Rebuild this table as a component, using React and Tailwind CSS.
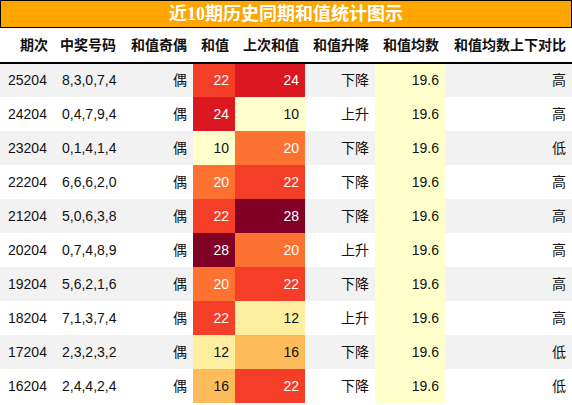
const rows = [
  ['25204', '8,3,0,7,4', '偶', 22, 24, '下降', '19.6', '高'],
  ['24204', '0,4,7,9,4', '偶', 24, 10, '上升', '19.6', '高'],
  ['23204', '0,1,4,1,4', '偶', 10, 20, '下降', '19.6', '低'],
  ['22204', '6,6,6,2,0', '偶', 20, 22, '下降', '19.6', '高'],
  ['21204', '5,0,6,3,8', '偶', 22, 28, '下降', '19.6', '高'],
  ['20204', '0,7,4,8,9', '偶', 28, 20, '上升', '19.6', '高'],
  ['19204', '5,6,2,1,6', '偶', 20, 22, '下降', '19.6', '高'],
  ['18204', '7,1,3,7,4', '偶', 22, 12, '上升', '19.6', '高'],
  ['17204', '2,3,2,3,2', '偶', 12, 16, '下降', '19.6', '低'],
  ['16204', '2,4,4,2,4', '偶', 16, 22, '下降', '19.6', '低'],
]

// heat colours for 和值 cells
const heat = {
  10: 'bg-[#ffffcc] text-[#111]',
  12: 'bg-[#ffeda0] text-[#111]',
  16: 'bg-[#febb5a] text-[#111]',
  20: 'bg-[#fe7231] text-white',
  22: 'bg-[#f43e27] text-white',
  24: 'bg-[#db1721] text-white',
  28: 'bg-[#800026] text-white',
}

const headers = ['期次', '中奖号码', '和值奇偶', '和值', '上次和值', '和值升降', '和值均数', '和值均数上下对比']

export default function App() {
  return (
    <div className="w-[572px] h-[405px] bg-white overflow-hidden text-[#111]" style={{ fontFamily: '"Liberation Sans", "Noto Sans CJK SC", sans-serif' }}>
      <div
        className="h-[28px] bg-[#ffa500] border border-black flex items-center justify-center text-white font-bold text-[18px] leading-none"
        style={{ fontFamily: '"Liberation Serif", "Noto Sans CJK SC", serif' }}
      >
        近10期历史同期和值统计图示
      </div>
      <table className="w-full table-fixed border-collapse text-[14px]">
        <colgroup>
          <col className="w-[54px]" />
          <col className="w-[68px]" />
          <col className="w-[71px]" />
          <col className="w-[42px]" />
          <col className="w-[70px]" />
          <col className="w-[70px]" />
          <col className="w-[70px]" />
          <col className="w-[127px]" />
        </colgroup>
        <thead>
          <tr className="h-[35px] border-b-2 border-black">
            {headers.map((h) => (
              <th key={h} className="text-right pr-[6px] font-bold whitespace-nowrap">{h}</th>
            ))}
          </tr>
        </thead>
        <tbody>
          {rows.map((r, i) => (
            <tr key={r[0]} className={`h-[34px] ${i % 2 === 0 ? 'bg-[#f2f2f2]' : 'bg-white'}`}>
              <td className="pl-[8px] text-left">{r[0]}</td>
              <td className="pl-[8px] text-left">{r[1]}</td>
              <td className="pr-[6px] text-right">{r[2]}</td>
              <td className={`pr-[6px] text-right ${heat[r[3]]}`}>{r[3]}</td>
              <td className={`pr-[6px] text-right ${heat[r[4]]}`}>{r[4]}</td>
              <td className="pr-[6px] text-right">{r[5]}</td>
              <td className="pr-[6px] text-right bg-[#ffffcc]">{r[6]}</td>
              <td className="pr-[6px] text-right">{r[7]}</td>
            </tr>
          ))}
        </tbody>
      </table>
    </div>
  )
}
